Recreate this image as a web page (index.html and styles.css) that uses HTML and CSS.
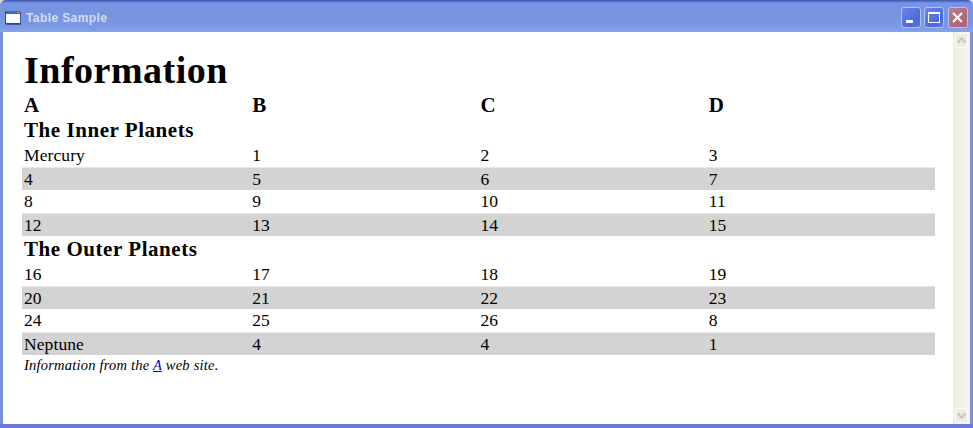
FILE: index.html
```html
<!doctype html>
<html lang="en">
<head>
    <meta charset="UTF-8" />
    <title>Table Sample</title>
    <link rel="stylesheet" href="styles.css">
</head>
<body>
    <div class="window">
        <div class="titlebar">
            <svg class="app-icon" width="16" height="14" viewBox="0 0 16 14">
                <rect x="1" y="1" width="15" height="13" fill="#3f54a8"/>
                <rect x="0" y="0" width="15" height="13" fill="#fff"/>
                <rect x="0" y="0" width="15" height="3" fill="#2f6fd8"/>
                <rect x="12" y="1" width="2" height="1" fill="#e88a40"/>
                <rect x="0" y="12" width="15" height="1" fill="#2a4aa8"/>
                <rect x="0" y="0" width="1" height="13" fill="#2a4aa8"/>
            </svg>
            <span class="title">Table Sample</span>
            <div class="controls">
                <div class="ctl">
                    <svg width="18" height="19" viewBox="0 0 18 19"><rect x="4" y="12" width="7" height="3" fill="#fff"/></svg>
                </div>
                <div class="ctl">
                    <svg width="18" height="19" viewBox="0 0 18 19"><rect x="3.5" y="4.5" width="11" height="10" fill="none" stroke="#fff"/><rect x="3" y="4" width="12" height="2" fill="#fff"/></svg>
                </div>
                <div class="ctl close">
                    <svg width="18" height="19" viewBox="0 0 18 19"><path d="M4 5l9 9M13 5l-9 9" stroke="#fff" stroke-width="2"/></svg>
                </div>
            </div>
        </div>
        <div class="client">
            <div class="content">
                <h1>Information</h1>
                <table>
                    <tr class="head">
                        <th>A</th><th>B</th><th>C</th><th>D</th>
                    </tr>
                    <tr class="group"><th colspan="4">The Inner Planets</th></tr>
                    <tr><td>Mercury</td><td>1</td><td>2</td><td>3</td></tr>
                    <tr class="odd"><td>4</td><td>5</td><td>6</td><td>7</td></tr>
                    <tr><td>8</td><td>9</td><td>10</td><td>11</td></tr>
                    <tr class="odd"><td>12</td><td>13</td><td>14</td><td>15</td></tr>
                    <tr class="group"><th colspan="4">The Outer Planets</th></tr>
                    <tr><td>16</td><td>17</td><td>18</td><td>19</td></tr>
                    <tr class="odd"><td>20</td><td>21</td><td>22</td><td>23</td></tr>
                    <tr><td>24</td><td>25</td><td>26</td><td>8</td></tr>
                    <tr class="odd"><td>Neptune</td><td>4</td><td>4</td><td>1</td></tr>
                </table>
                <p class="note">Information from the <a href="#">A</a> web site.</p>
            </div>
            <div class="scrollbar">
                <div class="arrow">
                    <svg width="11" height="7" viewBox="0 0 11 7"><path d="M1.5 5.5l4-4 4 4" fill="none" stroke="#c4c8bc" stroke-width="2"/></svg>
                </div>
                <div class="arrow">
                    <svg width="11" height="7" viewBox="0 0 11 7"><path d="M1.5 1.5l4 4 4-4" fill="none" stroke="#c4c8bc" stroke-width="2"/></svg>
                </div>
            </div>
        </div>
    </div>
</body>
</html>
```

FILE: styles.css
```css
html, body {
    margin: 0;
    padding: 0;
    overflow: hidden;
    background-color: #d8d8d8;
}

.window {
    width: 973px;
    height: 428px;
    display: flex;
    flex-direction: column;
    box-sizing: border-box;
    background-color: #7a8fe0;
    border-bottom: 4px solid #6a78d8;
    border-radius: 6px 6px 0 0;
}

.titlebar {
    height: 32px;
    flex-shrink: 0;
    box-sizing: border-box;
    padding: 3px 5.5px 0 5px;
    display: flex;
    align-items: center;
    border-radius: 6px 6px 0 0;
    background: linear-gradient(#3a52b0 0, #7a94e4 3px, #7894de 14px, #7b98e2 26px, #83a4ea 32px);
}

.app-icon {
    margin-right: 5px;
}

.title {
    font-family: "Liberation Sans", Arial, sans-serif;
    font-size: 12px;
    font-weight: bold;
    letter-spacing: 0.4px;
    color: #d3dcf6;
}

.controls {
    margin-left: auto;
    display: flex;
    gap: 3.5px;
}

.ctl {
    width: 20px;
    height: 21px;
    box-sizing: border-box;
    border: 1px solid #b4c2ee;
    border-radius: 3px;
    background: linear-gradient(135deg, #6a88e6, #4a68dc 70%, #5a78e4);
}

.ctl svg {
    display: block;
}

.close {
    background: linear-gradient(135deg, #bc7c8a, #ac6070);
}

.client {
    flex: 1;
    min-height: 0;
    margin: 0 3px;
    display: flex;
    background-color: #fff;
}

.content {
    flex: 1;
    padding: 0 18px 0 19px;
    font-family: "Liberation Serif", Georgia, serif;
    color: #000;
}

h1 {
    font-size: 38px;
    line-height: 42px;
    letter-spacing: 0.5px;
    margin: 17px 0 1px 2px;
}

table {
    width: 913px;
    border-collapse: separate;
    border-spacing: 0;
    table-layout: fixed;
}

th, td {
    padding: 0 2px;
    text-align: left;
}

.head th {
    height: 24px;
    padding-top: 1px;
    font-size: 21px;
    line-height: 20px;
}

.group th {
    height: 27px;
    font-size: 21px;
    letter-spacing: 0.55px;
}

td {
    height: 23px;
    font-size: 17.5px;
    letter-spacing: 0.1px;
}

.odd td {
    background-color: #d3d3d3;
    border-top: 1px solid #e8e8e8;
    height: 22px;
}

.note {
    margin: 0 0 0 2px;
    font-size: 14.5px;
    font-style: italic;
    letter-spacing: 0.22px;
    line-height: 20px;
}

a {
    color: #0000ee;
}

.scrollbar {
    width: 17px;
    box-sizing: border-box;
    padding: 1px 2px;
    display: flex;
    flex-direction: column;
    justify-content: space-between;
    background: linear-gradient(to right, #edece5, #f6f5f0);
}

.arrow {
    height: 15px;
    box-sizing: border-box;
    border: 1px solid #fbfbf8;
    border-radius: 2px;
    background-color: #ecece4;
    display: flex;
    align-items: center;
    justify-content: center;
}
```
